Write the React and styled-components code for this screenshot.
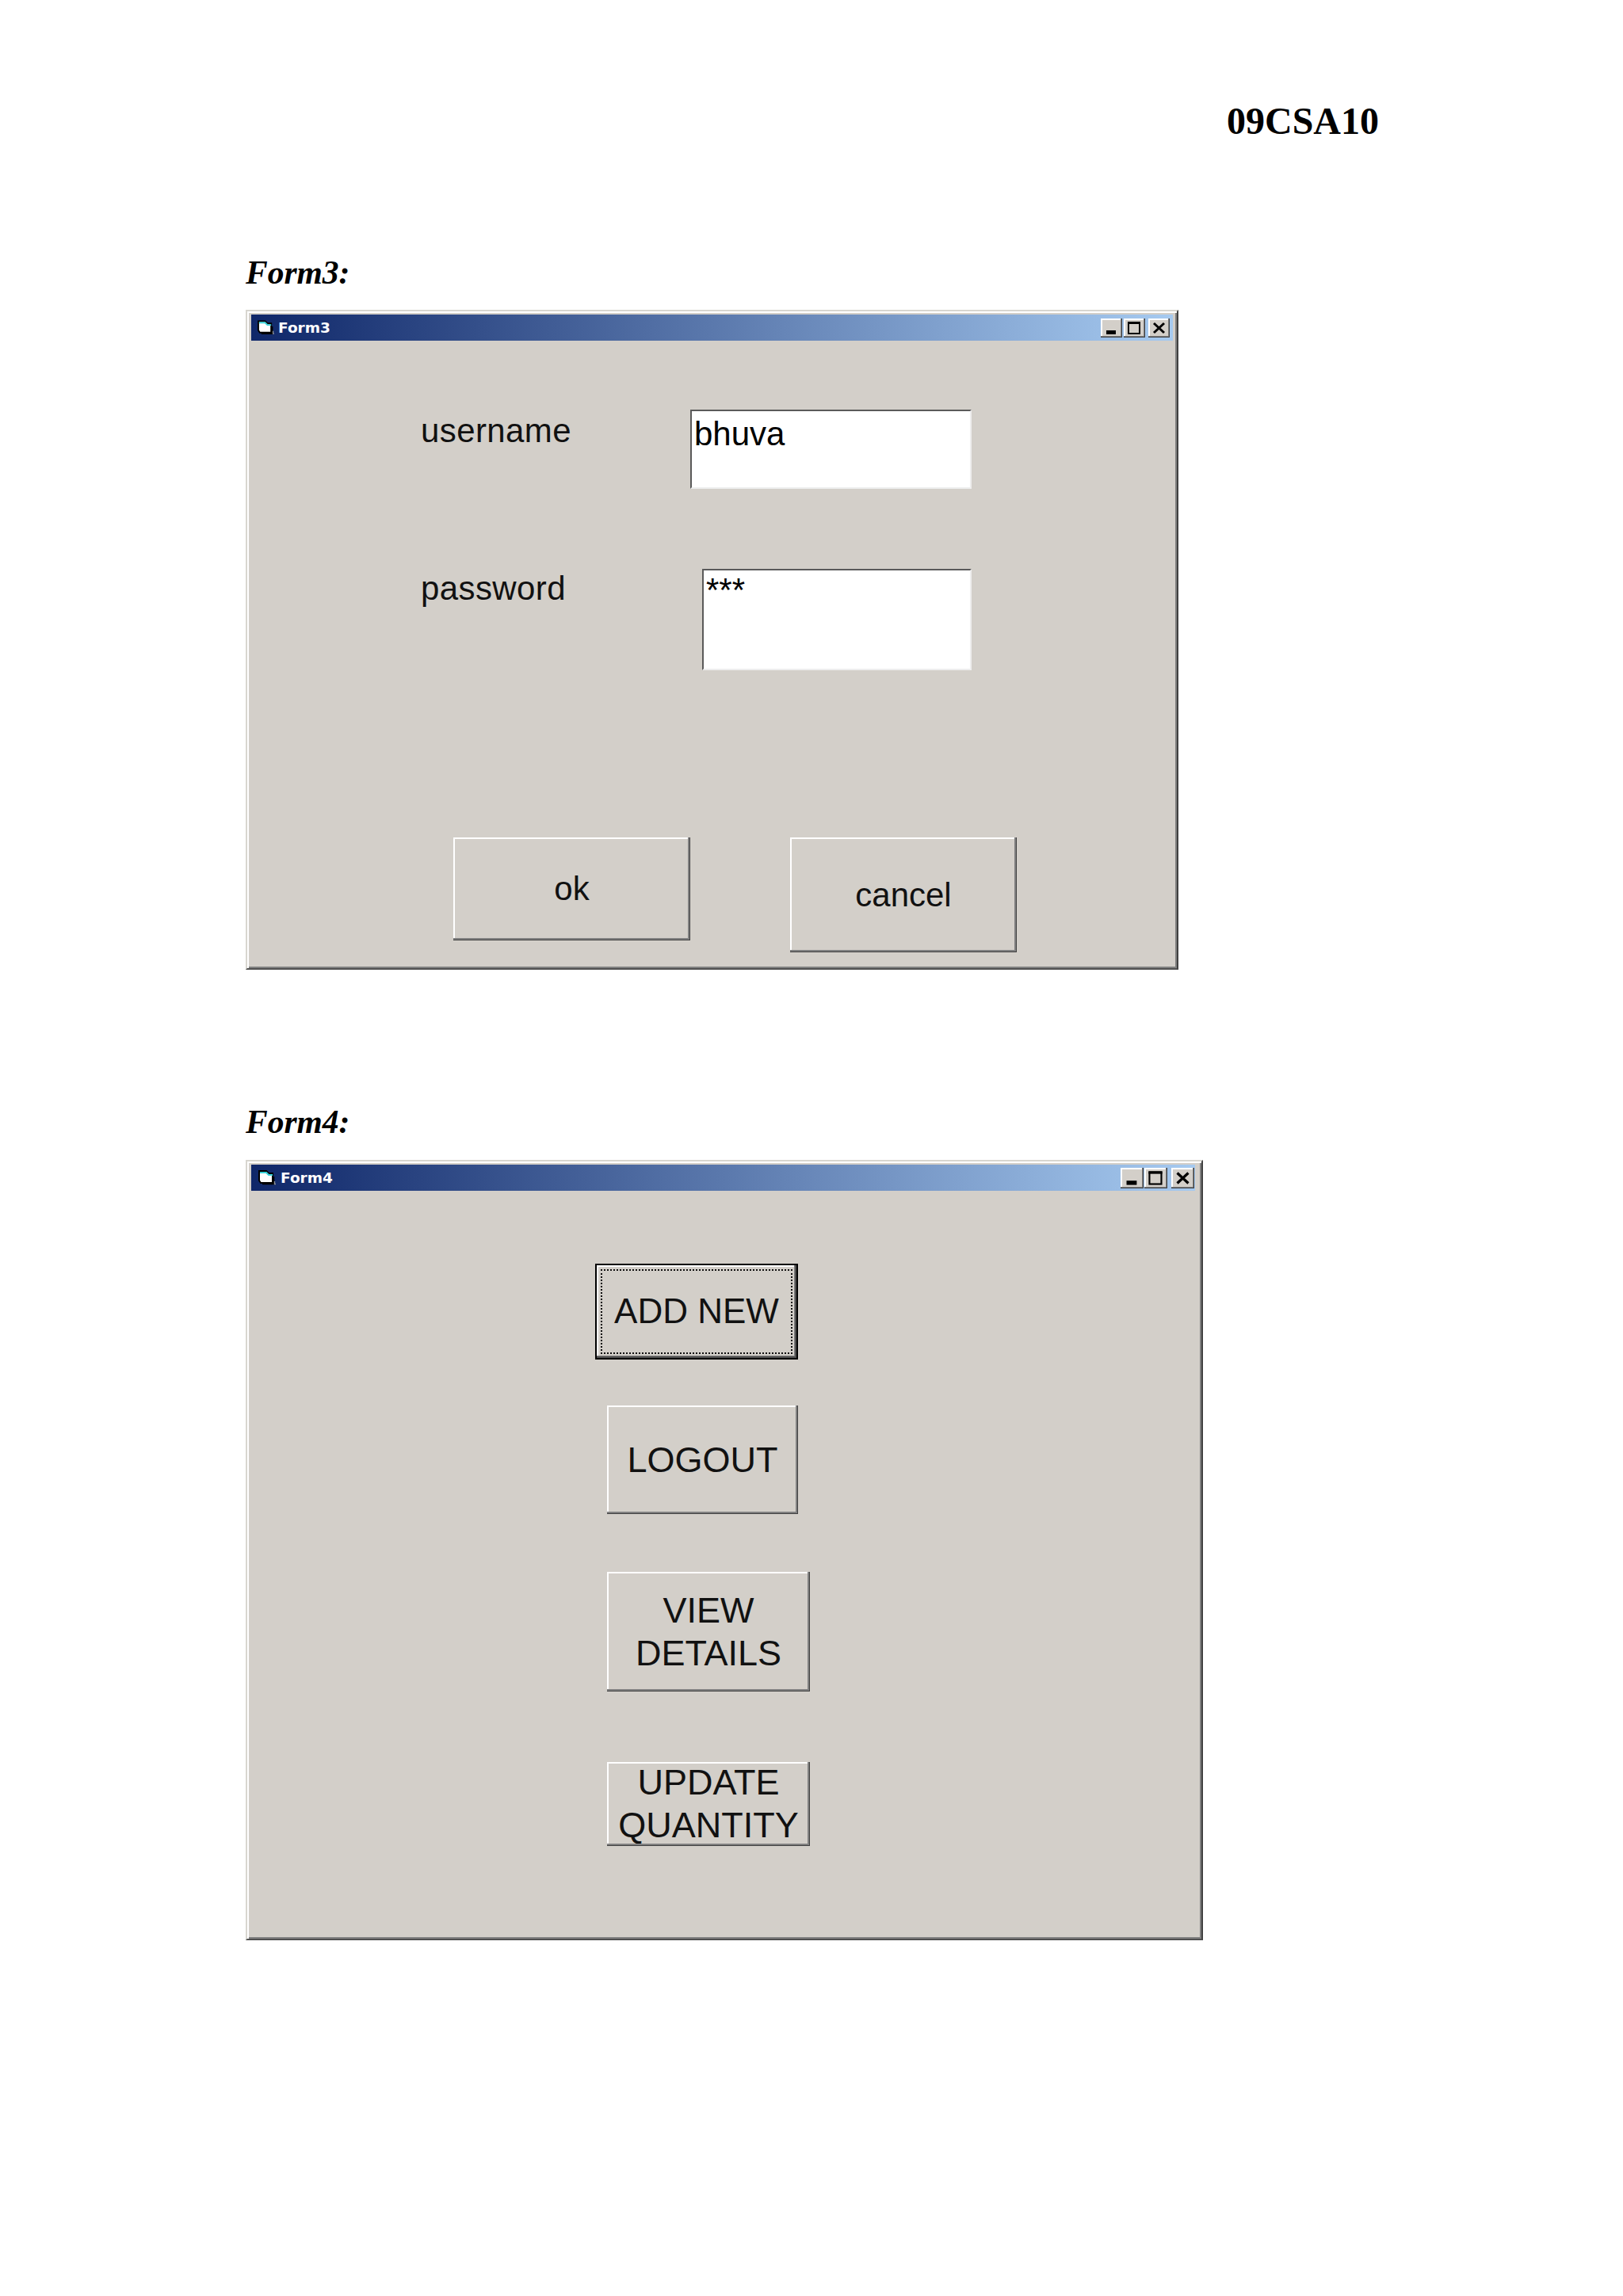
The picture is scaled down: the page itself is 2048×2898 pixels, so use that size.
import React from "react";
import styled, { createGlobalStyle } from "styled-components";

const Global = createGlobalStyle`
  html, body { margin: 0; padding: 0; background: #ffffff; }
  * { box-sizing: border-box; }
`;

const Page = styled.div`
  width: 2048px;
  min-height: 2898px;
  padding: 129px 310px 0;
  background: #ffffff;
  color: #000;
`;

const Code = styled.div`
  font: bold 48px/48px "Liberation Serif", serif;
  text-align: right;
  margin-right: -2px;
`;

const FormLabel = styled.div`
  font: italic bold 41.5px/42px "Liberation Serif", serif;
  margin-top: ${(p) => p.$top}px;
  margin-bottom: ${(p) => p.$bottom}px;
`;

const Window = styled.div`
  width: ${(p) => p.$width}px;
  padding: 4px ${(p) => p.$right}px 0 5px;
  background: #d3cfc9;
  border: 2px solid;
  border-color: #d8d6d0 #404040 #505050 #d8d6d0;
  box-shadow: inset 2px 2px 0 #ffffff, inset -2px -2px 0 #808080;
`;

const TitleBar = styled.div`
  height: 33px;
  display: flex;
  align-items: center;
  padding: 0 ${(p) => p.$right}px 0 8px;
  background: linear-gradient(90deg, #0f2769, #a6caf0);
`;

const TitleText = styled.span`
  margin-left: 5px;
  flex: 1;
  color: #ffffff;
  font: bold 18.5px/20px "DejaVu Sans", sans-serif;
`;

const CaptionButton = styled.div`
  width: ${(p) => p.$w}px;
  height: ${(p) => p.$h}px;
  margin-left: ${(p) => p.$gap || 0}px;
  flex: none;
  background: #d3cfc9;
  box-shadow: inset -1px -1px 0 #404040, inset -2px -2px 0 #808080, inset 2px 2px 0 #ffffff;
  svg { display: block; width: 100%; height: 100%; }
`;

const Form3Body = styled.div`
  padding: 87px 0 20px;
  display: flex;
  flex-direction: column;
`;

const FieldRow = styled.div`
  display: grid;
  grid-template-columns: 340px 355px;
  padding-left: 214px;
  margin-bottom: ${(p) => p.$bottom}px;
  align-items: start;
`;

const FieldLabel = styled.div`
  margin-top: ${(p) => p.$top}px;
  font: 42px/42px "Liberation Sans", sans-serif;
  letter-spacing: 0.4px;
  color: #111;
`;

const TextBox = styled.div`
  height: ${(p) => p.$h}px;
  margin-left: ${(p) => p.$inset || 0}px;
  padding: ${(p) => p.$pad}px 3px;
  background: #ffffff;
  border: 2px solid;
  border-color: #5a5a5a #eeeeee #eeeeee #5a5a5a;
  font: 42px/42px "Liberation Sans", sans-serif;
  color: #000;
`;

const ActionRow = styled.div`
  display: flex;
  align-items: flex-start;
  gap: 126px;
  padding-left: 255px;
`;

const PlainButton = styled.div`
  width: ${(p) => p.$w}px;
  height: ${(p) => p.$h}px;
  margin-left: ${(p) => p.$inset || 0}px;
  margin-bottom: ${(p) => p.$bottom || 0}px;
  display: flex;
  align-items: center;
  justify-content: center;
  text-align: center;
  white-space: nowrap;
  background: #d3cfc9;
  box-shadow: inset -1px -1px 0 #404040, inset -3px -3px 0 #808080, inset 2px 2px 0 #ffffff;
  font: ${(p) => (p.$big ? "45px/54px" : "42px/42px")} "Liberation Sans", sans-serif;
  color: #111;
`;

const DefaultButton = styled.div`
  width: ${(p) => p.$w}px;
  height: ${(p) => p.$h}px;
  margin-bottom: ${(p) => p.$bottom}px;
  padding: 7px;
  display: flex;
  background: #d3cfc9;
  box-shadow: inset 0 0 0 2px #000000, inset -4px -4px 0 #505050, inset -5px -5px 0 #808080, inset 4px 4px 0 #ffffff;
`;

const FocusRect = styled.div`
  flex: 1;
  display: flex;
  align-items: center;
  justify-content: center;
  padding-bottom: 2px;
  border: 2px dotted #111;
  white-space: nowrap;
  font: 44px/54px "Liberation Sans", sans-serif;
  color: #111;
`;

const Form4Body = styled.div`
  padding: 92px 0 117px 434px;
  display: flex;
  flex-direction: column;
  align-items: flex-start;
`;

const AppIcon = ({ w }) => (
  <svg width={w} height="19" viewBox="0 0 22 19" style={{ flex: "none" }}>
    <path d="M1 1 H10 L13 4 H18 V16 H3 L1 13 Z" fill="#fff" stroke="#000" strokeWidth="2" />
    <path d="M2 3 H10 L13 6 H18" fill="none" stroke="#36d0d8" strokeWidth="2" />
    <path d="M5 17 H19 V8" fill="none" stroke="#000" strokeWidth="2.6" />
    <path d="M20.5 14 V17.5 H22" fill="none" stroke="#8a8f98" strokeWidth="1.4" />
  </svg>
);

const MinGlyph = () => (
  <svg viewBox="0 0 27 24"><rect x="7" y="15" width="12" height="5" fill="#000" /></svg>
);
const MaxGlyph = () => (
  <svg viewBox="0 0 27 24">
    <rect x="6" y="5" width="14" height="14" fill="none" stroke="#000" strokeWidth="2" />
    <rect x="5" y="4" width="16" height="3" fill="#000" />
  </svg>
);
const CloseGlyph = () => (
  <svg viewBox="0 0 27 24">
    <path d="M7 6 L20 18 M20 6 L7 18" stroke="#000" strokeWidth="3" fill="none" />
  </svg>
);

const Caption = ({ title, iconW, w, h, right, maxGap, closeGap }) => (
  <TitleBar $right={right}>
    <AppIcon w={iconW} />
    <TitleText>{title}</TitleText>
    <CaptionButton $w={w} $h={h}><MinGlyph /></CaptionButton>
    <CaptionButton $w={w} $h={h} $gap={maxGap}><MaxGlyph /></CaptionButton>
    <CaptionButton $w={w} $h={h} $gap={closeGap}><CloseGlyph /></CaptionButton>
  </TitleBar>
);

export default function App() {
  return (
    <Page>
      <Global />
      <Code>09CSA10</Code>

      <FormLabel $top={146} $bottom={26}>Form3:</FormLabel>
      <Window $width={1177} $right={5}>
        <Caption title="Form3" iconW={21} w={27} h={24} right={4} maxGap={2} closeGap={4} />
        <Form3Body>
          <FieldRow $bottom={101}>
            <FieldLabel $top={6}>username</FieldLabel>
            <TextBox $h={100} $pad={8}>bhuva</TextBox>
          </FieldRow>
          <FieldRow $bottom={211}>
            <FieldLabel $top={4}>password</FieldLabel>
            <TextBox $h={128} $inset={15} $pad={4}>***</TextBox>
          </FieldRow>
          <ActionRow>
            <PlainButton $w={299} $h={130}>ok</PlainButton>
            <PlainButton $w={286} $h={145}>cancel</PlainButton>
          </ActionRow>
        </Form3Body>
      </Window>

      <FormLabel $top={171} $bottom={27}>Form4:</FormLabel>
      <Window $width={1208} $right={8}>
        <Caption title="Form4" iconW={24} w={29} h={26} right={1} maxGap={1} closeGap={5} />
        <Form4Body>
          <DefaultButton $w={256} $h={121} $bottom={58}>
            <FocusRect>ADD NEW</FocusRect>
          </DefaultButton>
          <PlainButton $big $w={241} $h={137} $inset={15} $bottom={73}>LOGOUT</PlainButton>
          <PlainButton $big $w={256} $h={151} $inset={15} $bottom={89}>VIEW<br />DETAILS</PlainButton>
          <PlainButton $big $w={256} $h={106} $inset={15}>UPDATE<br />QUANTITY</PlainButton>
        </Form4Body>
      </Window>
    </Page>
  );
}
